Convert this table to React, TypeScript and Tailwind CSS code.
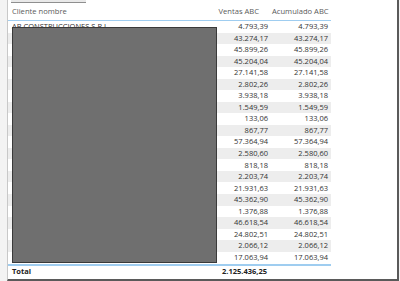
const rows = [
  "4.793,39",
  "43.274,17",
  "45.899,26",
  "45.204,04",
  "27.141,58",
  "2.802,26",
  "3.938,18",
  "1.549,59",
  "133,06",
  "867,77",
  "57.364,94",
  "2.580,60",
  "818,18",
  "2.203,74",
  "21.931,63",
  "45.362,90",
  "1.376,88",
  "46.618,54",
  "24.802,51",
  "2.066,12",
  "17.063,94",
];

export default function App() {
  return (
    <div
      className="relative flex h-[281px] w-[400px] overflow-hidden bg-[#f3f3f3] text-[7.5px] text-[#333333]"
      style={{ fontFamily: '"Segoe UI", "Open Sans", sans-serif' }}
    >
      <div className="w-[7px] shrink-0" />

      {/* visual frame */}
      <div className="flex h-[281px] w-[392px] flex-col border-b-2 border-l border-r-2 border-b-[#5a5a5a] border-l-[#c8c8c8] border-r-[#5a5a5a] bg-white">
        <div className="flex h-[3px]">
          <div className="ml-[3px] w-[75px] border-b border-[#8f8f8f] bg-[#e9e9e9]" />
        </div>

        <div className="w-[323px]">
          {/* header */}
          <div className="grid h-[17px] grid-cols-[1fr_60px_59px] items-center whitespace-nowrap text-[7.6px] text-[#5a5a5a]">
            <span className="pl-[4px]">Cliente nombre</span>
            <span className="pr-[13px] text-right">Ventas ABC</span>
            <span className="pr-[3px] text-right">Acumulado ABC</span>
          </div>
          <div className="h-[1px] bg-[#9fcdf0]" />

          {/* body */}
          <div className="flex h-[242px] flex-col">
            {rows.map((v, i) => (
              <div
                key={i}
                className={`grid flex-1 grid-cols-[1fr_60px_59px] items-center whitespace-nowrap ${
                  i % 2 === 1 ? "bg-[#ededed]" : "bg-white"
                }`}
              >
                <span className="truncate pl-[4px]">{i === 0 ? "AB CONSTRUCCIONES S.R.L." : ""}</span>
                <span className="pr-[4px] text-right">{v}</span>
                <span className="pr-[3px] text-right">{v}</span>
              </div>
            ))}
          </div>

          <div className="mt-[1px] h-[1.5px] bg-[#9fcdf0]" />

          {/* total */}
          <div className="grid h-[13px] grid-cols-[1fr_60px_59px] items-center whitespace-nowrap font-bold text-[#222222]">
            <span className="pl-[4px]">Total</span>
            <span className="pr-[5px] text-right">2.125.436,25</span>
            <span />
          </div>
        </div>
      </div>

      {/* redaction box over the names */}
      <div className="absolute left-[12px] top-[27px] h-[236px] w-[205px] border border-[#3a3a3a] bg-[#6f6f6f]" />
    </div>
  );
}
